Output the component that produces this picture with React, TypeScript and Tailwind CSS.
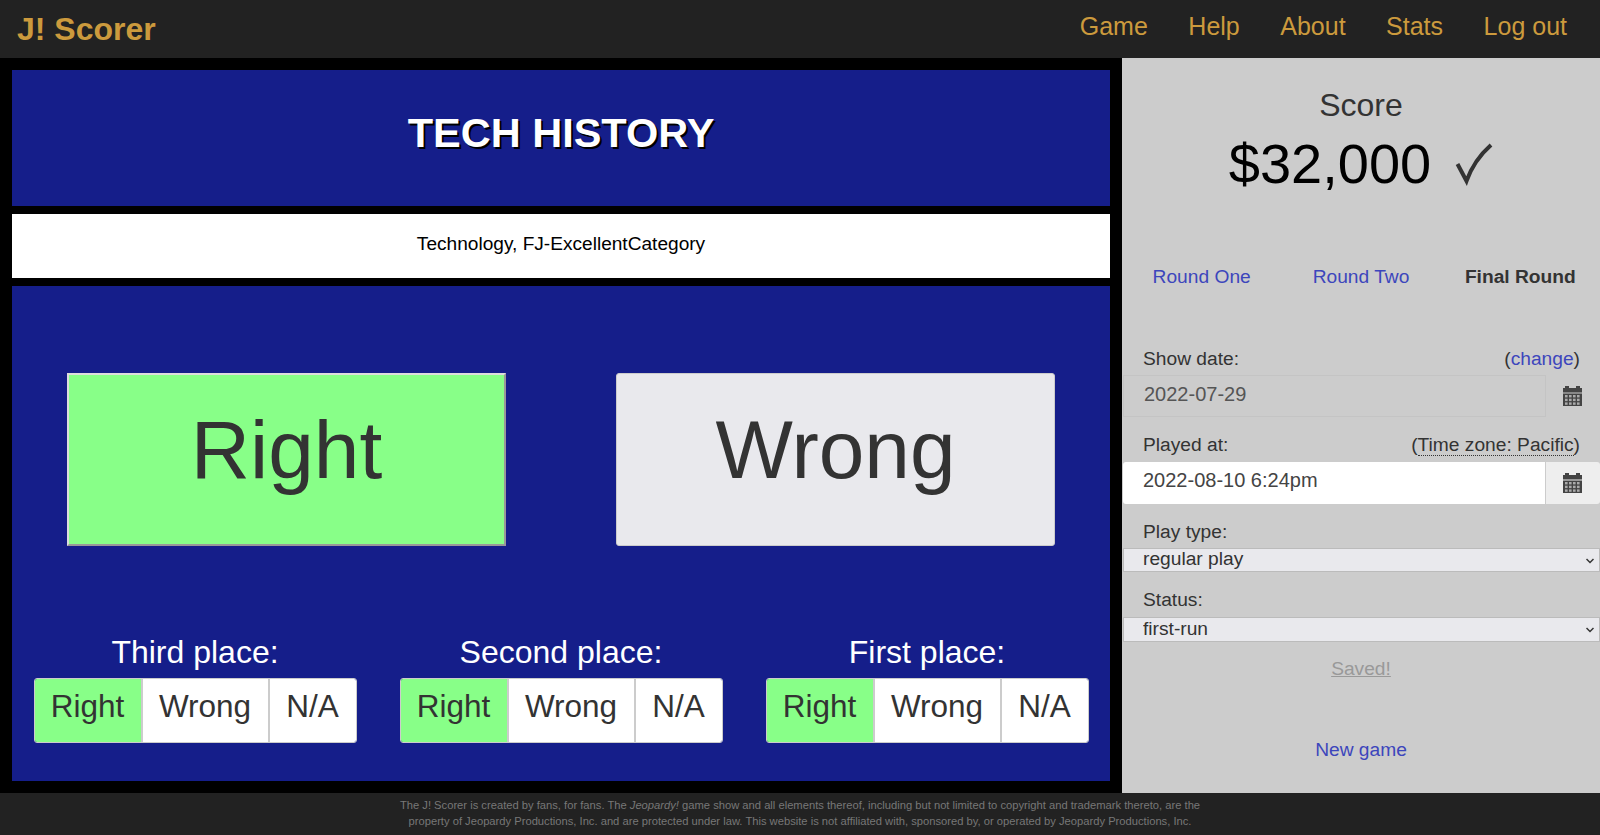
const LINK = "text-[#3c46bc]";

function PlaceGroup({ label }: { label: string }) {
  return (
    <div className="flex flex-col items-center">
      <div className="text-[32px] leading-[38px] text-white">{label}</div>
      <div className="mt-[7px] flex h-[65px] w-[323px] overflow-hidden rounded-[3px] border border-[#ccc] text-[31.5px] text-[#333]">
        <button className="w-[106px] bg-[#88ff88] pb-2">Right</button>
        <button className="w-[127px] border-l-2 border-[#ccc] bg-white pb-2">Wrong</button>
        <button className="flex-1 border-l-2 border-[#ccc] bg-white pb-2">N/A</button>
      </div>
    </div>
  );
}

function CalendarIcon() {
  const cells = [];
  for (let row = 0; row < 3; row++) {
    for (let col = 0; col < 4; col++) {
      cells.push(<rect key={`${row}-${col}`} x={2 + col * 4} y={9 + row * 3.7} width="2.6" height="2.4" fill="#fff" opacity="0.55" />);
    }
  }
  return (
    <svg width="19" height="20" viewBox="0 0 19 20" className="text-[#444]">
      <rect x="2" y="0" width="4" height="3" fill="currentColor" />
      <rect x="13" y="0" width="4" height="3" fill="currentColor" />
      <rect x="0" y="2" width="19" height="4.5" fill="currentColor" />
      <rect x="0" y="7.5" width="19" height="12.5" fill="currentColor" />
      {cells}
    </svg>
  );
}

function Addon({ active }: { active?: boolean }) {
  return (
    <div className={active ? "flex w-[54px] items-center justify-center rounded-r-[3px] bg-[#eee] pr-[2px]" : "flex w-[54px] items-center justify-center pr-[2px]"}>
      <CalendarIcon />
    </div>
  );
}

function SelectBox({ value, label, className }: { value: string; label: string; className: string }) {
  return (
    <div className={`relative ml-px ${className}`}>
      <select defaultValue={value} className="block h-full w-full appearance-none border border-[#bbb] bg-[#e9e9ed] pb-[2px] pl-[19px] leading-[20px] text-[#333]">
        <option value={value}>{label}</option>
      </select>
      <svg width="8" height="6" viewBox="0 0 8 6" className="pointer-events-none absolute right-[6px] top-[10px] text-[#333]">
        <path d="M0.5 1 L4 4.5 L7.5 1" fill="none" stroke="currentColor" strokeWidth="1.5" />
      </svg>
    </div>
  );
}

export default function App() {
  return (
    <div className="flex h-[835px] w-[1600px] flex-col overflow-hidden bg-black font-['Liberation_Sans',Arial,sans-serif]">
      <header className="flex h-[58px] items-center justify-between bg-[#222] pl-[17px] pr-[33px] text-[#cc9a3d]">
        <div className="text-[32px] font-bold">J! Scorer</div>
        <nav className="flex gap-[40.5px] pb-[5px] text-[25px]">
          <a>Game</a>
          <a>Help</a>
          <a>About</a>
          <a>Stats</a>
          <a>Log out</a>
        </nav>
      </header>

      <main className="flex h-[735px]">
        <section className="flex w-[1122px] flex-col gap-2 p-3">
          <div className="flex h-[136px] items-center justify-center bg-[#151e8a] pb-[10px] text-[41.5px] font-bold text-white [text-shadow:2px_2px_0_#000]">
            TECH HISTORY
          </div>
          <div className="flex h-[64px] items-center justify-center bg-white pb-1 text-[19.1px] text-black">
            Technology, FJ-ExcellentCategory
          </div>
          <div className="flex flex-1 flex-col bg-[#151e8a] pt-[87px]">
            <div className="grid grid-cols-2">
              <button className="mx-auto flex h-[173px] w-[439px] items-center justify-center border-2 border-t-[#ddd] border-l-[#ddd] border-r-[#999] border-b-[#999] bg-[#88ff88] pb-5 text-[82px] text-[#333]">
                Right
              </button>
              <button className="mx-auto flex h-[173px] w-[439px] items-center justify-center rounded-[3px] border border-[#ccc] bg-[#e9e9ed] pb-5 text-[82px] text-[#333]">
                Wrong
              </button>
            </div>
            <div className="mt-[87px] grid grid-cols-3">
              <PlaceGroup label="Third place:" />
              <PlaceGroup label="Second place:" />
              <PlaceGroup label="First place:" />
            </div>
          </div>
        </section>

        <aside className="flex w-[478px] flex-col bg-[#ccc] text-[19.2px] text-[#333]">
          <div className="mt-[28px] text-center text-[32px] leading-[38px]">Score</div>
          <div className="mt-[8px] flex items-center justify-center gap-[24px] text-[56px] leading-[64px]">
            <span className="text-black">$32,000</span>
            <svg width="38" height="44" viewBox="0 0 38 44" className="text-[#333]">
              <path d="M2.5 22 L11.5 39 Q19 18 36 3" fill="none" stroke="currentColor" strokeWidth="4" />
            </svg>
          </div>
          <div className="mt-[70px] grid grid-cols-3 text-center leading-[22px]">
            <a className={LINK}>Round One</a>
            <a className={LINK}>Round Two</a>
            <b>Final Round</b>
          </div>

          <div className="mt-[59px] flex justify-between pl-[21px] pr-[20px] leading-[24px]">
            <span>Show date:</span>
            <span>
              (<a className={LINK}>change</a>)
            </span>
          </div>
          <div className="mt-[4px] flex h-[42px] pl-px">
            <input
              readOnly
              disabled
              value="2022-07-29"
              className="min-w-0 flex-1 border border-[#c4c4c4] bg-[#ccc] pb-1 pl-5 text-[20px] text-[#555] opacity-100"
            />
            <Addon />
          </div>

          <div className="mt-[16px] flex justify-between pl-[21px] pr-[20px] leading-[24px]">
            <span>Played at:</span>
            <span>
              (<span className="border-b border-dotted border-[#333] leading-none">Time zone: Pacific</span>)
            </span>
          </div>
          <div className="mt-[5px] flex h-[42px] pl-px">
            <input readOnly value="2022-08-10 6:24pm" className="min-w-0 flex-1 rounded-l-[3px] border-r border-[#ccc] bg-white pb-[6px] pl-5 text-[20px] text-[#444]" />
            <Addon active />
          </div>

          <div className="mt-[16px] pl-[21px] leading-[24px]">Play type:</div>
          <SelectBox value="regular" label="regular play" className="mt-[4px] h-[24px]" />

          <div className="mt-[16px] pl-[21px] leading-[24px]">Status:</div>
          <SelectBox value="first" label="first-run" className="mt-[5px] h-[25px]" />

          <div className="mt-[16px] text-center leading-[22px] text-[#999] underline">Saved!</div>
          <div className="mt-[59px] text-center leading-[22px]">
            <a className={LINK}>New game</a>
          </div>
        </aside>
      </main>

      <footer className="flex h-[42px] justify-center bg-[#222] pt-[4px] text-center text-[11.2px] leading-[16px] text-[#777]">
        <p className="w-[820px]">
          The J! Scorer is created by fans, for fans. The <i>Jeopardy!</i> game show and all elements thereof, including but not limited to copyright and trademark thereto, are the property of Jeopardy Productions, Inc. and are protected under law. This website is not affiliated with, sponsored by, or operated by Jeopardy Productions, Inc.
        </p>
      </footer>
    </div>
  );
}
